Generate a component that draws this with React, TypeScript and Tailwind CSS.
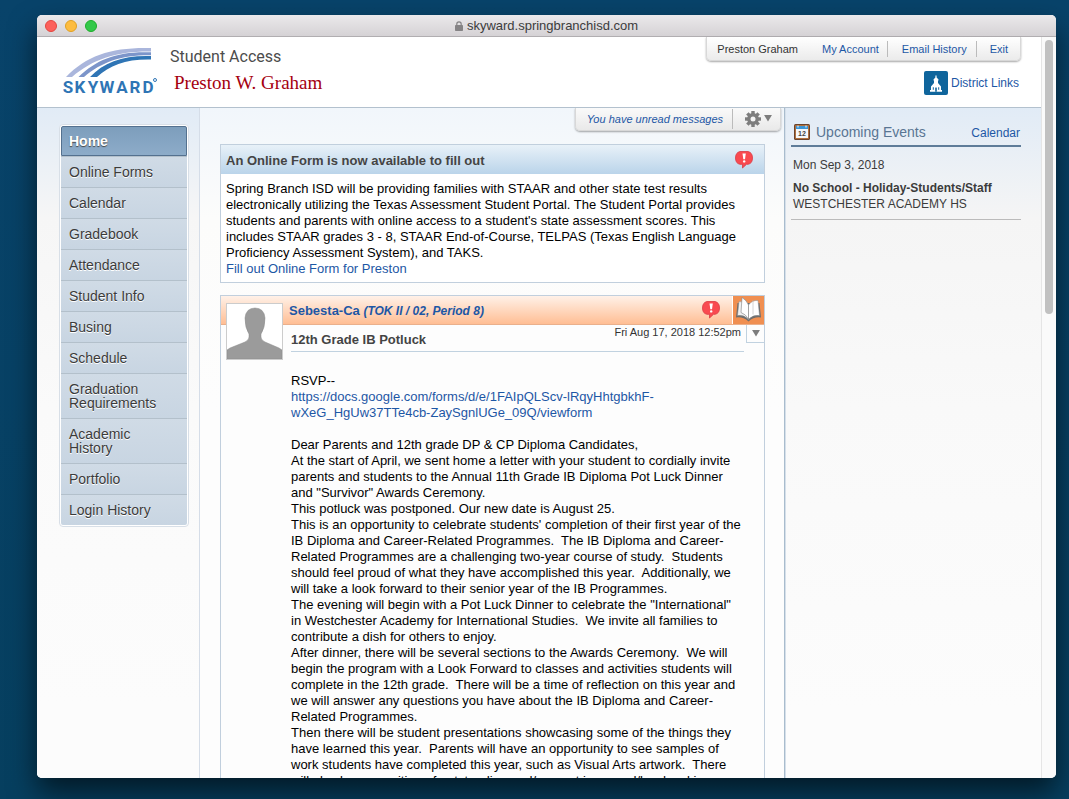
import React from "react";

const NAV = [
  "Home",
  "Online Forms",
  "Calendar",
  "Gradebook",
  "Attendance",
  "Student Info",
  "Busing",
  "Schedule",
  "Graduation Requirements",
  "Academic History",
  "Portfolio",
  "Login History",
];

const NOTICE = `Spring Branch ISD will be providing families with STAAR and other state test results
electronically utilizing the Texas Assessment Student Portal. The Student Portal provides
students and parents with online access to a student's state assessment scores. This
includes STAAR grades 3 - 8, STAAR End-of-Course, TELPAS (Texas English Language
Proficiency Assessment System), and TAKS.`;

const LETTER = `Dear Parents and 12th grade DP & CP Diploma Candidates,
At the start of April, we sent home a letter with your student to cordially invite
parents and students to the Annual 11th Grade IB Diploma Pot Luck Dinner
and "Survivor" Awards Ceremony.
This potluck was postponed. Our new date is August 25.
This is an opportunity to celebrate students' completion of their first year of the
IB Diploma and Career-Related Programmes.  The IB Diploma and Career-
Related Programmes are a challenging two-year course of study.  Students
should feel proud of what they have accomplished this year.  Additionally, we
will take a look forward to their senior year of the IB Programmes.
The evening will begin with a Pot Luck Dinner to celebrate the "International"
in Westchester Academy for International Studies.  We invite all families to
contribute a dish for others to enjoy.
After dinner, there will be several sections to the Awards Ceremony.  We will
begin the program with a Look Forward to classes and activities students will
complete in the 12th grade.  There will be a time of reflection on this year and
we will answer any questions you have about the IB Diploma and Career-
Related Programmes.
Then there will be student presentations showcasing some of the things they
have learned this year.  Parents will have an opportunity to see samples of
work students have completed this year, such as Visual Arts artwork.  There
will also be recognition of outstanding and/or most improved/hardworking`;

const LOGO_X = [5, 17, 30, 44, 59, 72, 85];

function Logo() {
  return (
    <svg viewBox="0 0 96 54" className="h-[54px] w-24" role="img" aria-label="Skyward">
      <path d="M3 30C24 8 50 0 88 1V4.500C54 4 30 12 9 30Z" fill="#aab6dc" />
      <path d="M15.500 30C34 12 55 4 88 5.300V8.300C58 8 39 15 21 30Z" fill="#7c95ca" />
      <path d="M27 30C41 15 61 8 88 9V12.500C63 12 47 18 34 30Z" fill="#2f75b5" />
      <g fill="#2f75b5" fontFamily="Roboto, Liberation Sans, sans-serif" fontWeight="700" fontSize="17">
        {"SKYWARD".split("").map((c, i) => (
          <text key={i} x={LOGO_X[i]} y="46" textAnchor="middle">{c}</text>
        ))}
      </g>
      <circle cx="92" cy="33" r="1.500" fill="none" stroke="#2f75b5" strokeWidth="1" />
    </svg>
  );
}

function Alert() {
  return (
    <svg viewBox="0 0 18 18" className="size-[18px]" aria-hidden="true">
      <path d="M5 .5H13Q17.500 1.500 17.500 7T13 13.300H11.500L7.500 17V13.300H5Q.5 12.500 .5 7T5 .5Z" fill="#f94a50" stroke="#d93a44" strokeWidth=".8" />
      <path d="M7.500 2.500H10.800L10 8.200H8.300Z" fill="#fff" />
      <circle cx="9.200" cy="10.400" r="1.200" fill="#fff" />
    </svg>
  );
}

function Gear() {
  return (
    <svg viewBox="-8 -8 16 16" className="size-4" aria-hidden="true">
      <g fill="#7d7d7d">
        {[0, 45, 90, 135].map((a) => (
          <rect key={a} x="-1.700" y="-8" width="3.400" height="16" transform={`rotate(${a})`} />
        ))}
      </g>
      <circle r="4.200" fill="none" stroke="#7d7d7d" strokeWidth="3.400" />
      <circle r="2.500" fill="#f3f3f3" />
    </svg>
  );
}

function Church() {
  return (
    <svg viewBox="0 0 24 24" className="size-6" aria-hidden="true">
      <rect width="24" height="24" rx="2" fill="#0f659c" />
      <path d="M11.400 4.500H12.600V6.500L14.500 8.500V9.500H14V12L17 15.500V19H18V20.800H6V19H7V15.500L10 12V9.500H9.500V8.500L11.400 6.500Z" fill="#fff" />
      <path d="M8.800 16.300H9.800V18.800H8.800ZM14.200 16.300H15.200V18.800H14.200ZM11.200 20.800V17Q12 15.700 12.800 17V20.800Z" fill="#0f659c" />
    </svg>
  );
}

function CalendarIcon() {
  return (
    <svg viewBox="0 0 16 16" className="size-4" aria-hidden="true">
      <rect width="16" height="16" rx="1.500" fill="#6b432b" />
      <rect x="1" y="1" width="14" height="14" rx="1" fill="#b0713f" />
      <rect x="2" y="2" width="12" height="12" fill="#f5f8fa" />
      <rect x="2" y="2" width="12" height="3" fill="#3b95d6" />
      <path d="M4 1.500V3.500M12 1.500V3.500" stroke="#fff" />
      <text x="8" y="11.500" textAnchor="middle" fontSize="7" fontWeight="700" fill="#444" fontFamily="Liberation Sans, sans-serif">12</text>
    </svg>
  );
}

function Book() {
  return (
    <svg viewBox="0 0 31 28" className="h-7 w-[31px]" aria-hidden="true">
      <path d="M4.500 7L3 21.500Q10 20.500 15.500 25.500Q21 20.500 28 21.500L26.500 7Z" fill="#6d6d6d" />
      <path d="M6 5.500L4.500 19.500Q11 18.500 15.500 23.500V10Q11 5 6 5.500Z" fill="#f1f1f1" stroke="#8a8a8a" strokeWidth=".5" />
      <path d="M25 4.500L26.500 19.500Q20 18.500 15.500 23.500V9Q19 4 25 4.500Z" fill="#fff" stroke="#8a8a8a" strokeWidth=".5" />
      <path d="M9 1.500Q13.500 4 15.500 9V23Q12.500 18 8 16.500Z" fill="#fff" stroke="#808080" strokeWidth=".6" />
      <path d="M20 4.500V18.500" stroke="#c9c9c9" strokeWidth=".8" />
    </svg>
  );
}

function Avatar() {
  return (
    <svg viewBox="0 0 55 55" className="size-[55px]" role="img" aria-label="Sebesta-Ca">
      <path d="M0 55V46L3 44L18 38Q22 36 22 33V30Q18 24 18 14Q19 4 28 4T38 14Q38 24 34 30V33Q34 36 38 38L52 44L55 46V55Z" fill="#9b9b9b" stroke="#888" strokeWidth=".5" />
    </svg>
  );
}

function Down() {
  return (
    <svg viewBox="0 0 10 8" className="h-[7px] w-2.5" aria-hidden="true">
      <path d="M.5 0H9.500L5 7.500Z" fill="#7d7d7d" />
    </svg>
  );
}

export default function App() {
  return (
    <div className="h-screen overflow-hidden bg-linear-to-b from-[#08436a] to-[#063f5f] pt-[15px] pr-[13px] pb-[21px] pl-[37px] font-['Liberation_Sans',Arial,sans-serif] text-[13px] leading-4 text-black">
      <div className="flex h-full flex-col overflow-hidden rounded-[5px] bg-white shadow-[0_14px_28px_rgba(0,0,0,0.6)]">
        <div className="grid h-[22px] shrink-0 grid-cols-[1fr_auto_1fr] items-center border-b border-[#b1aeb1] bg-linear-to-b from-[#ebe9eb] to-[#d5d2d5] px-2">
          <div className="flex gap-2">
            <span className="size-3 rounded-full border border-[#e2463f] bg-[#fc605b]" />
            <span className="size-3 rounded-full border border-[#dfa023] bg-[#fdbc40]" />
            <span className="size-3 rounded-full border border-[#1dad2b] bg-[#34c84a]" />
          </div>
          <div className="flex items-center gap-1 pt-px text-[13px] text-[#3c3c3c]">
            <svg viewBox="0 0 8 10" className="h-2.5 w-2" aria-hidden="true">
              <rect y="4" width="8" height="6" rx=".8" fill="#858385" />
              <path d="M1.800 5V3A2.200 2.200 0 0 1 6.200 3V5" fill="none" stroke="#858385" strokeWidth="1.200" />
            </svg>
            skyward.springbranchisd.com
          </div>
        </div>

        <div className="flex min-h-0 flex-1">
          <div className="flex min-w-0 flex-1 flex-col">
            <header className="flex h-[71px] shrink-0 justify-between border-b border-[#b3c1ce] pr-5 pl-[26px]">
              <div className="flex">
                <div className="pt-2.5"><Logo /></div>
                <div className="pt-2 pl-[11px]">
                  <div className="font-['Roboto',sans-serif] text-[16px] leading-6 text-[#4c4c4c]">Student Access</div>
                  <div className="pl-1 font-['Liberation_Serif',serif] text-[19px] leading-7 text-[#a5000f]">Preston W. Graham</div>
                </div>
              </div>
              <div className="flex flex-col items-end">
                <nav className="flex h-6 items-center rounded-b-[5px] border border-t-0 border-[#d8d8d8] bg-linear-to-b from-white to-[#ebebeb] pr-3 pl-2.5 text-[11px] text-[#1d57a5] shadow-[0_1px_2px_rgba(0,0,0,0.35)]">
                  <span className="pr-6 text-[#333]">Preston Graham</span>
                  <a href="#account" className="pr-2">My Account</a>
                  <a href="#email" className="border-l border-[#bbb] pr-[9px] pl-3.5">Email History</a>
                  <a href="#exit" className="border-l border-[#bbb] pl-[13px]">Exit</a>
                </nav>
                <a href="#links" className="mt-2.5 flex items-center gap-[3px] pr-0.5 text-[12px] text-[#1d57a5]">
                  <Church />District Links
                </a>
              </div>
            </header>

            <div className="flex min-h-0 flex-1 overflow-hidden bg-[#fcfcfc]">
              <aside className="w-[163px] shrink-0 border-r border-[#d5dde8] bg-[linear-gradient(to_bottom,#e1ebf6_0px,#f6f6f6_110px,#fafafa_300px,#fcfcfc_600px)] pt-4 pl-[22px]">
                <nav className="w-[130px] rounded-[4px] border border-[#d8dfe7] bg-white p-px text-[14px] leading-[14px]">
                  {NAV.map((n, i) => (
                    <a
                      key={n}
                      href={"#" + n.toLowerCase().replace(" ", "-")}
                      className={
                        i === 0
                          ? "block rounded-t-[2px] border border-[#54718f] bg-linear-to-b from-[#7d9ebc] to-[#8dacc9] p-[7px] font-bold text-white [text-shadow:0_1px_1px_#444]"
                          : "block border-t border-[#b3c0cb] bg-linear-to-b from-[#d0dbe6] to-[#c8d5e2] py-2 pr-6 pl-2 text-[#3b3b3b] [text-shadow:0_1px_0_#fff] last:rounded-b-[2px]"
                      }
                    >
                      {n}
                    </a>
                  ))}
                </nav>
              </aside>

              <main className="min-w-0 flex-1 bg-[linear-gradient(to_bottom,#f1f6fb_0px,#fcfcfb_110px,#fdfdfd_300px)] pr-[19px] pl-5">
                <div className="-mr-4 flex justify-end">
                  <div className="flex h-[23px] items-center rounded-b-[5px] border border-t-0 border-[#d8d8d8] bg-linear-to-b from-[#fafafa] to-[#e9e9e9] pb-px pl-[11px] text-[11px] italic shadow-[0_1px_2px_rgba(0,0,0,0.35)]">
                    <a href="#messages" className="pr-[9px] text-[#1d57a5]">You have unread messages</a>
                    <button type="button" aria-label="Settings" className="flex h-5 items-center gap-0.5 border-l border-[#bbb] pr-[7px] pl-3">
                      <Gear /><Down />
                    </button>
                  </div>
                </div>

                <section className="mt-[13px] border border-[#c1cfdd] bg-white">
                  <div className="flex h-[29px] items-center justify-between bg-linear-to-b from-[#e8f1f8] to-[#bad4ea] pr-[11px] pl-[5px]">
                    <h2 className="pt-0.5 font-bold text-[#444]">An Online Form is now available to fill out</h2>
                    <Alert />
                  </div>
                  <div className="px-[5px] pt-[7px] pb-[5px]">
                    <p className="whitespace-pre">{NOTICE}</p>
                    <a href="#form" className="text-[#1d57a5]">Fill out Online Form for Preston</a>
                  </div>
                </section>

                <section className="relative mt-3 border border-[#c1cfdd] bg-[#fdfdfd]">
                  <div className="flex h-[29px] items-center border-b border-[#eab08c] bg-linear-to-b from-[#fff1e8] to-[#ffbe94] pl-[68px]">
                    <h2 className="flex-1 pt-0.5 font-bold text-[#1d57a5]">
                      Sebesta-Ca <em className="text-[12px]">(TOK II / 02, Period 8)</em>
                    </h2>
                    <Alert />
                    <div className="ml-3 border-l border-white bg-[#f08f51]"><Book /></div>
                  </div>
                  <div className="absolute top-[7px] left-[5px] border border-[#ccc] bg-white"><Avatar /></div>
                  <div className="flex pl-[70px]">
                    <div className="mr-0.5 flex h-[27px] flex-1 justify-between border-b border-[#c1d2e0]">
                      <h3 className="pt-[7px] font-bold text-[#444]">12th Grade IB Potluck</h3>
                      <time className="pr-[3px] text-[11px] leading-[14px] text-[#333]">Fri Aug 17, 2018 12:52pm</time>
                    </div>
                    <button type="button" aria-label="Message options" className="flex h-[18px] w-[18px] items-center justify-center border-b border-l border-[#c1d2e0]"><Down /></button>
                  </div>
                  <div className="pt-[21px] pl-[70px] whitespace-pre">
                    <p>RSVP--</p>
                    <a href="#viewform" className="text-[#1d57a5]">{"https://docs.google.com/forms/d/e/1FAIpQLScv-lRqyHhtgbkhF-\nwXeG_HgUw37TTe4cb-ZaySgnlUGe_09Q/viewform"}</a>
                    <p className="mt-4">{LETTER}</p>
                  </div>
                </section>
              </main>

              <aside className="w-[257px] shrink-0 border-l border-[#a9bccd] bg-[linear-gradient(to_bottom,#e1ebf6_0px,#f5f5f5_110px,#f9f9f9_300px,#fcfcfc_600px)] pt-4 pr-5 pl-1.5 text-[12px] text-[#3b3b3b] shadow-[inset_1px_0_0_#d6e0ea]">
                <div className="flex h-[23px] items-start border-b-2 border-[#5f7c99] pr-px pl-[3px]">
                  <CalendarIcon />
                  <h2 className="flex-1 pl-1.5 text-[14px] text-[#597593]">Upcoming Events</h2>
                  <a href="#calendar" className="pt-px text-[#1d57a5]">Calendar</a>
                </div>
                <div className="border-b border-[#bbb] pt-2.5 pb-[7px] pl-0.5">
                  <p>Mon Sep 3, 2018</p>
                  <p className="mt-[7px] font-bold">No School - Holiday-Students/Staff</p>
                  <p>WESTCHESTER ACADEMY HS</p>
                </div>
              </aside>
            </div>
          </div>
          <div className="w-[15px] shrink-0 border-l border-[#e5e5e5] bg-[#fafafa] pt-[3px] pl-[3px]">
            <div className="h-[274px] w-2 rounded-full bg-[#c1c1c1]" />
          </div>
        </div>
      </div>
    </div>
  );
}
